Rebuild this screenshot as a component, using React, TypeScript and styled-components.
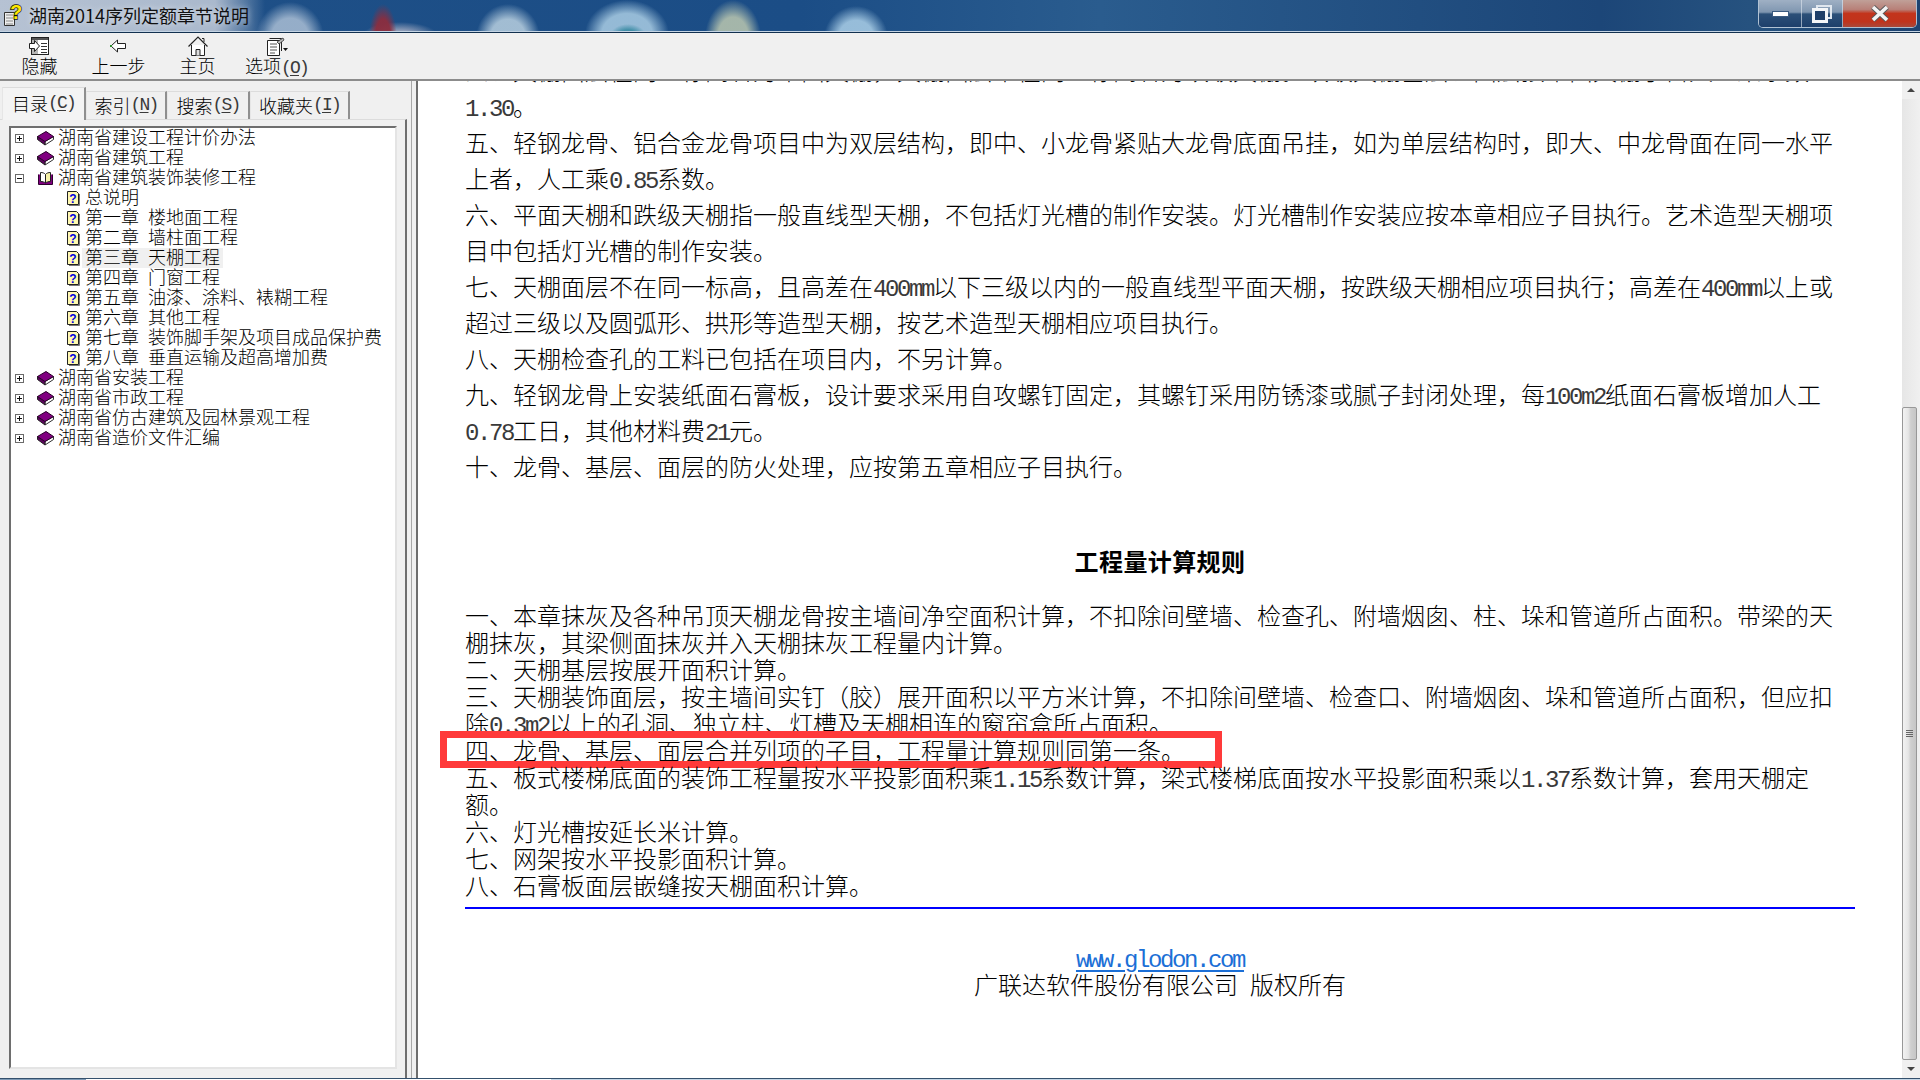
import React from "react";
import styled, {createGlobalStyle} from "styled-components";

interface ITreeItem {
    label: string;
    level: 0 | 1;
    state?: "closed" | "open";
    active?: boolean;
}

const treeItems: ITreeItem[] = [
    {label: "湖南省建设工程计价办法", level: 0, state: "closed"},
    {label: "湖南省建筑工程", level: 0, state: "closed"},
    {label: "湖南省建筑装饰装修工程", level: 0, state: "open"},
    {label: "总说明", level: 1},
    {label: "第一章 楼地面工程", level: 1},
    {label: "第二章 墙柱面工程", level: 1},
    {label: "第三章 天棚工程", level: 1, active: true},
    {label: "第四章 门窗工程", level: 1},
    {label: "第五章 油漆、涂料、裱糊工程", level: 1},
    {label: "第六章 其他工程", level: 1},
    {label: "第七章 装饰脚手架及项目成品保护费", level: 1},
    {label: "第八章 垂直运输及超高增加费", level: 1},
    {label: "湖南省安装工程", level: 0, state: "closed"},
    {label: "湖南省市政工程", level: 0, state: "closed"},
    {label: "湖南省仿古建筑及园林景观工程", level: 0, state: "closed"},
    {label: "湖南省造价文件汇编", level: 0, state: "closed"},
];

const notes = [
    "四、天棚面层在同一标高者为平面天棚，天棚面层不在同一标高者为跌级天棚。跌级天棚基层、面层按平面天棚子目人工乘系数1.30。",
    "五、轻钢龙骨、铝合金龙骨项目中为双层结构，即中、小龙骨紧贴大龙骨底面吊挂，如为单层结构时，即大、中龙骨面在同一水平上者，人工乘0.85系数。",
    "六、平面天棚和跌级天棚指一般直线型天棚，不包括灯光槽的制作安装。灯光槽制作安装应按本章相应子目执行。艺术造型天棚项目中包括灯光槽的制作安装。",
    "七、天棚面层不在同一标高，且高差在400mm以下三级以内的一般直线型平面天棚，按跌级天棚相应项目执行；高差在400mm以上或超过三级以及圆弧形、拱形等造型天棚，按艺术造型天棚相应项目执行。",
    "八、天棚检查孔的工料已包括在项目内，不另计算。",
    "九、轻钢龙骨上安装纸面石膏板，设计要求采用自攻螺钉固定，其螺钉采用防锈漆或腻子封闭处理，每100m2纸面石膏板增加人工0.78工日，其他材料费21元。",
    "十、龙骨、基层、面层的防火处理，应按第五章相应子目执行。",
];

const rules = [
    "一、本章抹灰及各种吊顶天棚龙骨按主墙间净空面积计算，不扣除间壁墙、检查孔、附墙烟囱、柱、垛和管道所占面积。带梁的天棚抹灰，其梁侧面抹灰并入天棚抹灰工程量内计算。",
    "二、天棚基层按展开面积计算。",
    "三、天棚装饰面层，按主墙间实钉（胶）展开面积以平方米计算，不扣除间壁墙、检查口、附墙烟囱、垛和管道所占面积，但应扣除0.3m2以上的孔洞、独立柱、灯槽及天棚相连的窗帘盒所占面积。",
    "四、龙骨、基层、面层合并列项的子目，工程量计算规则同第一条。",
    "五、板式楼梯底面的装饰工程量按水平投影面积乘1.15系数计算，梁式楼梯底面按水平投影面积乘以1.37系数计算，套用天棚定额。",
    "六、灯光槽按延长米计算。",
    "七、网架按水平投影面积计算。",
    "八、石膏板面层嵌缝按天棚面积计算。",
];

// half width latin next to the cjk text, like SimSun
function Mixed({text}: { text: string }) {
    return (
        <>
            {text.split(/([\x20-\x7e]+)/).map((part, i) =>
                /^[\x20-\x7e]+$/.test(part) ? <Lat key={i}>{part}</Lat> : part
            )}
        </>
    );
}

function ClosedBook() {
    return (
        <svg width="17" height="15" viewBox="0 0 17 15">
            <polygon points="8,10.5 16.5,5.5 16.5,8.5 8,14" fill="#fff" stroke="#333" strokeWidth="1"/>
            <polygon points="0.5,5.5 0.5,8.5 8,14 8,10.5" fill="#5c005c" stroke="#222" strokeWidth="1"/>
            <polygon points="0.5,5.5 9,0.5 16.5,5.5 8,10.5" fill="#800080" stroke="#2a002a" strokeWidth="1"/>
        </svg>
    );
}

function OpenBook() {
    return (
        <svg width="17" height="15" viewBox="0 0 17 15">
            <path d="M1.5 3.5V13.5H15.5V3.5" fill="#800080" stroke="#300030"/>
            <path d="M3.5 1.5C5.5 1.5 7.5 2 8.5 3.5V12C7.5 11 5.5 10.5 3.5 10.5Z" fill="#fff" stroke="#222"/>
            <path d="M13.5 1.5C11.5 1.5 9.5 2 8.5 3.5V12C9.5 11 11.5 10.5 13.5 10.5Z" fill="#f7f3a8" stroke="#222"/>
        </svg>
    );
}

function HelpPage() {
    return (
        <svg width="13" height="15" viewBox="0 0 13 15">
            <path d="M0.5 0.5H9.5L11.5 2.5V13.5H0.5Z" fill="#fff9b0" stroke="#222"/>
            <path d="M12.5 3V14.5H2" fill="none" stroke="#777"/>
            <text x="6" y="12" textAnchor="middle" fontFamily="Liberation Sans" fontWeight="700" fontSize="12" fill="#0000e0">?</text>
        </svg>
    );
}

function AppIcon() {
    return (
        <svg width="20" height="24" viewBox="0 0 20 24">
            <path d="M1.5 9.5H11.5V22.5H1.5Z" fill="#eee" stroke="#333"/>
            <path d="M3 12H10M3 15H10M3 18H10M3 21H10" stroke="#888"/>
            <text x="13" y="16" textAnchor="middle" fontFamily="Liberation Sans" fontWeight="700" fontSize="20" fill="#ffe800" stroke="#111" strokeWidth="1.4" paintOrder="stroke">?</text>
        </svg>
    );
}

function HideIcon() {
    return (
        <svg width="21" height="19" viewBox="0 0 21 19" shapeRendering="crispEdges">
            <rect x="2.5" y="0.5" width="17" height="17" fill="#fff" stroke="#222"/>
            <rect x="3" y="1" width="16" height="2" fill="#555"/>
            <rect x="3" y="3" width="6" height="14" fill="#b5b5b5"/>
            <path d="M12 6H18M12 9H18M12 12H18M12 15H18" stroke="#333"/>
            <polygon points="0.5,6.5 5.5,6.5 5.5,3.5 10.5,9 5.5,14.5 5.5,11.5 0.5,11.5" fill="#fff" stroke="#222" shapeRendering="auto"/>
        </svg>
    );
}

function BackIcon() {
    return (
        <svg width="17" height="14" viewBox="0 0 17 14">
            <polygon points="1,7 7.5,1 7.5,4.5 15.5,4.5 15.5,9.5 7.5,9.5 7.5,13" fill="#fff" stroke="#222"/>
            <rect x="0" y="6" width="2" height="2" fill="#2a8a2a"/>
        </svg>
    );
}

function HomeIcon() {
    return (
        <svg width="20" height="20" viewBox="0 0 20 20">
            <path d="M3.5 9V19.5H16.5V9" fill="#fff" stroke="#222"/>
            <path d="M0.5 10.5L10 1L19.5 10.5" fill="none" stroke="#222" strokeWidth="1.2"/>
            <path d="M14 2.5H16V6" fill="none" stroke="#222"/>
            <path d="M8 19.5V13.5H12V19.5" fill="#ddd" stroke="#222"/>
        </svg>
    );
}

function OptionIcon() {
    return (
        <svg width="22" height="19" viewBox="0 0 22 19">
            <path d="M1.5 3.5H13.5V18.5H1.5Z" fill="#fff" stroke="#222"/>
            <path d="M3.5 1.5H15.5V14" fill="none" stroke="#222"/>
            <path d="M4 7H11M4 10H11M4 13H11M4 16H9" stroke="#555"/>
            <path d="M11 5L17 1L18 3L13 7Z" fill="#bbb" stroke="#333" strokeWidth="0.8"/>
            <polygon points="17,11 22,11 19.5,14" fill="#111"/>
        </svg>
    );
}

function App() {
    return (
        <Page>
            <GlobalStyle/>
            <TitleBar>
                <TitleGroup>
                    <AppIcon/>
                    <TitleText>湖南2014序列定额章节说明</TitleText>
                </TitleGroup>
                <WindowButtons>
                    <WinButton $w={43}>
                        <svg width="17" height="6" viewBox="0 0 17 6">
                            <rect x="0.5" y="0.5" width="16" height="5" fill="#fff" stroke="#3a5a80"/>
                        </svg>
                    </WinButton>
                    <WinButton $w={41}>
                        <svg width="20" height="18" viewBox="0 0 20 18">
                            <rect x="5" y="1" width="14" height="12" fill="none" stroke="#dfe6ee" strokeWidth="2"/>
                            <rect x="1.5" y="4.5" width="13" height="12" fill="#1f3f68" stroke="#f4f6f8" strokeWidth="3"/>
                        </svg>
                    </WinButton>
                    <CloseButton>
                        <svg width="20" height="17" viewBox="0 0 20 17">
                            <path d="M3 2L17 15M17 2L3 15" stroke="#5a5a5a" strokeWidth="5.5"/>
                            <path d="M3 2L17 15M17 2L3 15" stroke="#f4f4f4" strokeWidth="3.6"/>
                        </svg>
                    </CloseButton>
                </WindowButtons>
            </TitleBar>

            <Toolbar>
                <ToolButton><IconSlot><HideIcon/></IconSlot>隐藏</ToolButton>
                <ToolButton><IconSlot><BackIcon/></IconSlot>上一步</ToolButton>
                <ToolButton><IconSlot><HomeIcon/></IconSlot>主页</ToolButton>
                <ToolButton><IconSlot><OptionIcon/></IconSlot><span>选项<Lat>(<u>O</u>)</Lat></span></ToolButton>
            </Toolbar>

            <Main>
                <LeftPane>
                    <Tabs>
                        <Tab $w={84} $active>目录<Lat>(<u>C</u>)</Lat></Tab>
                        <Tab $w={81}>索引<Lat>(<u>N</u>)</Lat></Tab>
                        <Tab $w={83}>搜索<Lat>(<u>S</u>)</Lat></Tab>
                        <Tab $w={100}>收藏夹<Lat>(<u>I</u>)</Lat></Tab>
                    </Tabs>
                    <TabPanel>
                        <TreeBox>
                            {treeItems.map((item) => (
                                <TreeRow key={item.label} $level={item.level}>
                                    {item.level === 0 && (
                                        <Expander $open={item.state === "open"}/>
                                    )}
                                    <TreeIcon $level={item.level}>
                                        {item.level === 1 ? <HelpPage/> : item.state === "open" ? <OpenBook/> : <ClosedBook/>}
                                    </TreeIcon>
                                    <TreeLabel $active={item.active}><Mixed text={item.label}/></TreeLabel>
                                </TreeRow>
                            ))}
                        </TreeBox>
                    </TabPanel>
                </LeftPane>

                <Splitter><SplitLine/></Splitter>

                <Content>
                    <Article>
                        <NoteBlock>
                            {notes.map((text) => <p key={text}><Mixed text={text}/></p>)}
                        </NoteBlock>
                        <Heading>工程量计算规则</Heading>
                        <RuleBlock>
                            {rules.map((text, i) => (
                                <RuleLine key={text}>
                                    <Mixed text={text}/>
                                    {i === 3 && <RedMark/>}
                                </RuleLine>
                            ))}
                        </RuleBlock>
                        <BlueRule/>
                        <FootLink href="#"><Lat>www.glodon.com</Lat></FootLink>
                        <FootText>广联达软件股份有限公司<Lat> </Lat>版权所有</FootText>
                    </Article>
                    <ScrollBar>
                        <ScrollButton><ArrowUp/></ScrollButton>
                        <ScrollTrack>
                            <ScrollThumb>
                                <Grip/><Grip/><Grip/><Grip/>
                            </ScrollThumb>
                        </ScrollTrack>
                        <ScrollButton><ArrowDown/></ScrollButton>
                    </ScrollBar>
                </Content>
            </Main>
            <BottomStrip/>
        </Page>
    );
}

export default App;

const CJK = `"Noto Sans CJK SC", "Liberation Sans", sans-serif`;

const GlobalStyle = createGlobalStyle`
  html, body {
    margin: 0;
    padding: 0;
    overflow: hidden;
    background: #f0f0f0;
  }

  * {
    box-sizing: border-box;
  }
`
const Page = styled.div`
  width: 1920px;
  height: 1080px;
  display: flex;
  flex-direction: column;
  overflow: hidden;
  color: #000;
  font-family: ${CJK};
  font-weight: 300;
  text-spacing-trim: space-all;
  text-autospace: no-autospace;
  font-kerning: none;
`
const Lat = styled.span`
  font-family: "Liberation Mono", monospace;
  font-weight: 400;
  line-height: 0;
  letter-spacing: -0.1em;
  white-space: pre;
  color: #3a3a3a;

  u {
    text-underline-offset: 2px;
  }
`
const TitleBar = styled.header`
  height: 33px;
  flex: none;
  display: flex;
  justify-content: space-between;
  padding-right: 3px;
  border-bottom: 1px solid #12304f;
  box-shadow: inset 0 -1px 0 #c4d4e4;
  background:
    radial-gradient(ellipse 34px 36px at 290px 38px, rgba(170, 190, 212, .85) 55%, transparent),
    radial-gradient(ellipse 14px 34px at 383px 38px, rgba(140, 45, 62, .95) 55%, transparent),
    radial-gradient(ellipse 38px 14px at 400px 36px, rgba(190, 190, 205, .7) 40%, transparent),
    radial-gradient(ellipse 32px 34px at 508px 38px, rgba(185, 208, 224, .85) 55%, transparent),
    radial-gradient(ellipse 18px 12px at 628px 36px, rgba(60, 140, 165, .95) 50%, transparent),
    radial-gradient(ellipse 42px 34px at 627px 34px, rgba(170, 205, 228, .85) 60%, transparent),
    radial-gradient(ellipse 28px 38px at 733px 38px, rgba(188, 200, 176, .85) 55%, transparent),
    radial-gradient(ellipse 32px 32px at 856px 38px, rgba(172, 208, 232, .85) 55%, transparent),
    linear-gradient(to right, rgba(190, 200, 215, .95) 0, rgba(185, 196, 212, .9) 215px, rgba(30, 80, 135, 0) 265px),
    linear-gradient(to right, #1f5087 0, #1b4d86 800px, #2a5c8e 1100px, #1c4678 1600px, #26527f 1750px, #1c4270 100%);
`
const TitleGroup = styled.div`
  display: flex;
  align-items: center;
  gap: 6px;
  padding: 0 0 3px 3px;
`
const TitleText = styled.span`
  font-size: 18px;
  font-weight: 400;
  color: #111;
  text-shadow: 0 0 6px rgba(255, 255, 255, .7);
`
const WindowButtons = styled.div`
  height: 28px;
  display: flex;
  border: 1px solid rgba(225, 232, 240, .75);
  border-top: none;
  border-radius: 0 0 5px 5px;
  overflow: hidden;
`
const WinButton = styled.div<{ $w: number }>`
  width: ${(p) => p.$w}px;
  display: flex;
  align-items: center;
  justify-content: center;
  border-right: 1px solid rgba(225, 232, 240, .6);
  background: linear-gradient(to bottom, #9fb0c4 0, #7f96b0 45%, #2c5078 52%, #1d3f6b 100%);
`
const CloseButton = styled.div`
  width: 73px;
  display: flex;
  align-items: center;
  justify-content: center;
  background: linear-gradient(to bottom, #c0a098 0, #b88078 35%, #c3341c 50%, #c0331c 80%, #a8483a 100%);
`
const Toolbar = styled.nav`
  height: 48px;
  flex: none;
  display: flex;
  background: #f0f0f0;
  border-bottom: 2px solid #8c8c8c;
`
const ToolButton = styled.div`
  width: 79px;
  display: flex;
  flex-direction: column;
  align-items: center;
  padding-top: 3px;
  font-size: 18px;
  line-height: 19px;
  white-space: nowrap;
`
const IconSlot = styled.div`
  height: 20px;
  display: flex;
  align-items: center;
  justify-content: center;
`
const Main = styled.main`
  flex: 1;
  min-height: 0;
  display: flex;
`
const LeftPane = styled.aside`
  width: 407px;
  flex: none;
  display: flex;
  flex-direction: column;
  background: #f0f0f0;
`
const Tabs = styled.div`
  height: 38px;
  flex: none;
  display: flex;
  align-items: flex-end;
  padding-left: 2px;
`
const Tab = styled.div<{ $w: number; $active?: boolean }>`
  width: ${(p) => p.$w}px;
  height: ${(p) => (p.$active ? 33 : 28)}px;
  margin-bottom: ${(p) => (p.$active ? -1 : 0)}px;
  padding-bottom: 2px;
  position: relative;
  display: flex;
  align-items: center;
  justify-content: center;
  font-size: 18px;
  white-space: nowrap;
  background: ${(p) => (p.$active ? "#f4f4f4" : "#f0f0f0")};
  border-top: 1px solid #dcdcdc;
  border-left: 1px solid #e6e6e6;
  border-right: 2px solid #8f8f8f;
`
const TabPanel = styled.div`
  flex: 1;
  min-height: 0;
  display: flex;
  padding: 6px 8px 9px 9px;
  border-top: 1px solid #dcdcdc;
  border-right: 2px solid #6e6e6e;
`
const TreeBox = styled.div`
  flex: 1;
  background: #fff;
  border-style: solid;
  border-width: 2px;
  border-color: #6e6e6e #e4e4e4 #e4e4e4 #6e6e6e;
`
const TreeRow = styled.div<{ $level: number }>`
  height: 20px;
  display: flex;
  align-items: center;
  padding-left: ${(p) => (p.$level === 0 ? 4 : 56)}px;
  font-size: 18px;
  white-space: nowrap;
`
const Expander = styled.span<{ $open: boolean }>`
  width: 9px;
  height: 9px;
  flex: none;
  margin-right: 13px;
  border: 1px solid #6a6a6a;
  background:
    linear-gradient(#111, #111) center / 5px 1px no-repeat
    ${(p) => (p.$open ? "" : ", linear-gradient(#111, #111) center / 1px 5px no-repeat")};
`
const TreeIcon = styled.span<{ $level: number }>`
  width: ${(p) => (p.$level === 0 ? 18 : 15)}px;
  height: 15px;
  flex: none;
  display: flex;

  svg {
    display: block;
  }
`
const TreeLabel = styled.span<{ $active?: boolean }>`
  padding: 0 3px;
  line-height: 17px;
  height: 20px;
  background: ${(p) => (p.$active ? "#f0f0f0" : "transparent")};
`
const Splitter = styled.div`
  width: 9px;
  flex: none;
  background: #f0f0f0;
`
const SplitLine = styled.div`
  width: 1px;
  height: 100%;
  margin-left: 4px;
  background: #a8a8a8;
`
const Content = styled.section`
  flex: 1;
  min-width: 0;
  display: flex;
  background: #fff;
  border-left: 2px solid #6e6e6e;
`
const Article = styled.article`
  flex: 1;
  min-width: 0;
  overflow: hidden;
  padding: 0 47px;
  font-size: 24px;
`
const NoteBlock = styled.div`
  margin-top: -29px;
  line-height: 36px;

  p {
    margin: 0;
  }
`
const Heading = styled.h2`
  margin: 59px 0 22px;
  font-size: 24px;
  font-weight: 700;
  line-height: 36px;
  letter-spacing: .4px;
  text-align: center;
`
const RuleBlock = styled.div`
  line-height: 27px;
`
const RuleLine = styled.p`
  position: relative;
  margin: 0;
`
const RedMark = styled.span`
  position: absolute;
  left: -25px;
  top: -5px;
  width: 782px;
  height: 37px;
  border: 7px solid #ff3a3a;
`
const BlueRule = styled.hr`
  height: 2px;
  margin: 9px 0 35px;
  border: none;
  background: #0000ff;
`
const FootLink = styled.a`
  display: block;
  width: fit-content;
  margin: 0 auto;
  line-height: 26px;
  color: #1c6fd6;
  text-decoration: underline;
  text-underline-offset: 3px;

  span {
    color: inherit;
  }
`
const FootText = styled.div`
  margin-top: 1px;
  line-height: 26px;
  text-align: center;
`
const ScrollBar = styled.div`
  width: 18px;
  flex: none;
  display: flex;
  flex-direction: column;
  background: #f0f0f0;
`
const ScrollButton = styled.div`
  height: 18px;
  flex: none;
  display: flex;
  align-items: center;
  justify-content: center;
`
const ArrowUp = styled.span`
  border-left: 4px solid transparent;
  border-right: 4px solid transparent;
  border-bottom: 4px solid #444;
`
const ArrowDown = styled.span`
  border-left: 4px solid transparent;
  border-right: 4px solid transparent;
  border-top: 4px solid #444;
`
const ScrollTrack = styled.div`
  flex: 1;
  min-height: 0;
  display: flex;
  flex-direction: column;
  justify-content: flex-end;
  padding-right: 3px;
  background: linear-gradient(to right, #e6e6e6, #f0f0f0);
`
const ScrollThumb = styled.div`
  height: 653px;
  display: flex;
  flex-direction: column;
  align-items: center;
  justify-content: center;
  gap: 1px;
  border: 1px solid #989898;
  border-radius: 2px;
  background: linear-gradient(to right, #f2f2f2 0, #e6e6e6 40%, #cfcfcf 60%, #c6c6c6 100%);
`
const Grip = styled.span`
  width: 7px;
  height: 1px;
  background: #666;
`
const BottomStrip = styled.footer`
  height: 2px;
  flex: none;
  border-top: 1px solid #34506c;
  background: linear-gradient(to right, #7f9ab5 86px, #fff 86px, #fff 551px, #c4d6e6 551px);
`
